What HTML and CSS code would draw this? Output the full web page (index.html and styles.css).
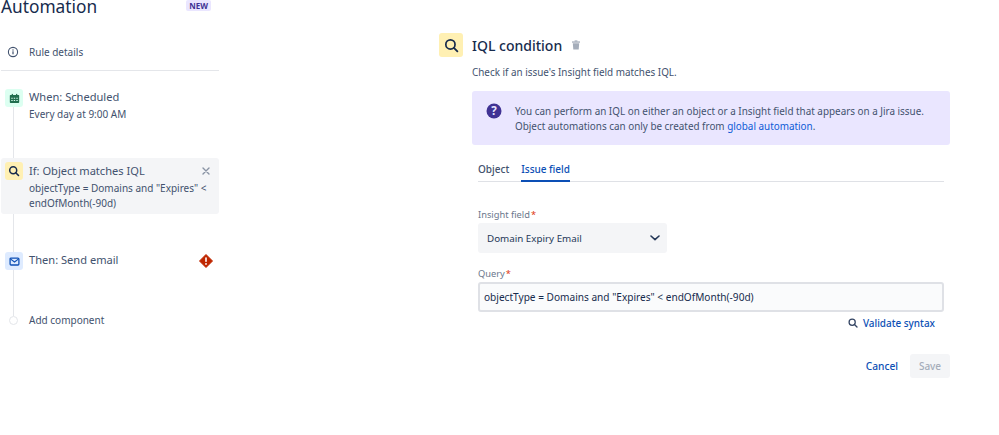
FILE: index.html
```html
<!DOCTYPE html>
<html lang="en">
<head>
<meta charset="utf-8">
<title>Automation</title>
<link rel="stylesheet" href="styles.css">
</head>
<body>
<div class="page">
  <aside class="sidebar">
    <header class="head">
      <h1>Automation</h1>
      <span class="new">NEW</span>
    </header>
    <div class="details">
      <svg class="info" viewBox="0 0 12 12" width="12" height="12"><circle cx="6" cy="6" r="4.6" fill="none" stroke="#42526e" stroke-width="1.1"/><rect x="5.4" y="5.3" width="1.2" height="3" fill="#42526e"/><rect x="5.4" y="3.4" width="1.2" height="1.2" fill="#42526e"/></svg>
      <span>Rule details</span>
    </div>
    <div class="timeline">
      <div class="rail"></div>
      <div class="step step-when">
        <span class="tile tile-green">
          <svg viewBox="0 0 12 12" width="11" height="11"><path d="M1.5 2.2h9a.6.6 0 0 1 .6.6v7.4a.8.8 0 0 1-.8.8H1.700a.8.8 0 0 1-.8-.8V2.800a.6.6 0 0 1 .6-.6z" fill="#216e4e"/><rect x="3" y="1" width="1.300" height="2" fill="#216e4e"/><rect x="7.700" y="1" width="1.300" height="2" fill="#216e4e"/><path d="M2.500 5.200h1.500v1.200H2.500zM5.200 5.200h1.500v1.200H5.200zM8 5.200h1.500v1.200H8zM2.500 7.600h1.500v1.200H2.500zM5.200 7.600h1.500v1.200H5.200zM8 7.600h1.500v1.200H8z" fill="#dcfff1"/></svg>
        </span>
        <div class="step-text step-text-up">
          <div class="step-title">When: Scheduled</div>
          <div class="step-sub">Every day at 9:00 AM</div>
        </div>
      </div>
      <div class="step step-if">
        <span class="tile tile-yellow">
          <svg viewBox="0 0 12 12" width="12" height="12"><circle cx="5.200" cy="5.200" r="3.500" fill="none" stroke="#172b4d" stroke-width="1.500"/><path d="M7.800 7.800l2.700 2.700" stroke="#172b4d" stroke-width="1.600" stroke-linecap="round"/></svg>
        </span>
        <div class="step-text">
          <div class="step-title">If: Object matches IQL</div>
          <div class="step-sub">objectType = Domains and "Expires" &lt; endOfMonth(-90d)</div>
        </div>
        <svg class="close" viewBox="0 0 8 8" width="8" height="8"><path d="M1 1l6 6M7 1L1 7" stroke="#8993a4" stroke-width="1.400" stroke-linecap="round"/></svg>
      </div>
      <div class="step step-then">
        <span class="tile tile-blue">
          <svg viewBox="0 0 12 12" width="11" height="11"><rect x="1.200" y="2.200" width="9.600" height="7.600" rx="1" fill="none" stroke="#0c4fb5" stroke-width="1.400"/><path d="M1.800 3.400L6 6.500l4.200-3.100" fill="none" stroke="#0c4fb5" stroke-width="1.300"/></svg>
        </span>
        <div class="step-title step-title-grow">Then: Send email</div>
        <svg class="error" viewBox="0 0 14 14" width="14" height="14"><path d="M7 .5l6.500 6.500L7 13.500.5 7z" fill="#bf2600" stroke="#bf2600" stroke-linejoin="round"/><rect x="6.200" y="3.300" width="1.600" height="4.700" rx=".7" fill="#fff"/><circle cx="7" cy="9.900" r=".95" fill="#fff"/></svg>
      </div>
      <div class="step step-add">
        <span class="dot"></span>
        <span class="add-label">Add component</span>
      </div>
    </div>
  </aside>

  <main class="panel">
    <div class="panel-head">
      <span class="tile-big">
        <svg viewBox="0 0 14 14" width="15" height="15"><circle cx="6" cy="6" r="4.300" fill="none" stroke="#172b4d" stroke-width="1.600"/><path d="M9.200 9.200l3.300 3.300" stroke="#172b4d" stroke-width="1.700" stroke-linecap="round"/></svg>
      </span>
      <h2>IQL condition</h2>
      <svg class="trash" viewBox="0 0 10 10" width="10" height="10"><rect x="1" y="1.400" width="8" height="1.300" fill="#a5adba"/><rect x="3.600" y=".4" width="2.800" height="1.200" fill="#a5adba"/><path d="M1.800 3.300h6.400l-.5 6.200H2.300z" fill="#a5adba"/></svg>
    </div>
    <div class="panel-body">
      <p class="desc">Check if an issue's Insight field matches IQL.</p>
      <div class="notice">
        <svg class="help" viewBox="0 0 16 16" width="16" height="16"><circle cx="8" cy="8" r="7.500" fill="#403294"/><text x="8" y="12" text-anchor="middle" class="help-mark">?</text></svg>
        <p>You can perform an IQL on either an object or a Insight field that appears on a Jira issue.<br>Object automations can only be created from <a href="#">global automation</a>.</p>
      </div>
      <div class="form">
        <nav class="tabs">
          <span class="tab">Object</span>
          <span class="tab tab-active">Issue field</span>
        </nav>
        <label class="label label-first">Insight field<span class="req">*</span></label>
        <div class="select">
          <span>Domain Expiry Email</span>
          <svg viewBox="0 0 10 6" width="10" height="6"><path d="M1 1l4 3.600L9 1" fill="none" stroke="#253858" stroke-width="1.600" stroke-linecap="round" stroke-linejoin="round"/></svg>
        </div>
        <label class="label label-query">Query<span class="req">*</span></label>
        <div class="input">objectType = Domains and "Expires" &lt; endOfMonth(-90d)</div>
        <div class="validate">
          <svg viewBox="0 0 12 12" width="10" height="10"><circle cx="5" cy="5" r="3.700" fill="none" stroke="#344563" stroke-width="1.500"/><path d="M7.800 7.800l3 3" stroke="#344563" stroke-width="1.600" stroke-linecap="round"/></svg>
          <a href="#">Validate syntax</a>
        </div>
      </div>
      <div class="actions">
        <a class="cancel" href="#">Cancel</a>
        <span class="save">Save</span>
      </div>
    </div>
  </main>
</div>
</body>
</html>
```

FILE: styles.css
```css
* { box-sizing: border-box; }
html, body { margin: 0; padding: 0; background: #fff; }
body {
  width: 999px;
  height: 435px;
  overflow: hidden;
  font-family: "Noto Sans", "Open Sans", sans-serif;
  font-size: 10px;
  color: #42526e;
}
.page { display: flex; align-items: flex-start; }

.sidebar { width: 218px; flex: none; margin-left: 1px; }
.head { display: flex; justify-content: space-between; height: 68px; margin-top: -6px; padding-right: 8px; }
.head h1 { margin: 1px 0 0; font-size: 17.300px; line-height: 24px; font-weight: 400; color: #172b4d; }
.new { align-self: flex-start; margin-top: 6px; padding: 0 3px; height: 11px; line-height: 11px; font-size: 8px; font-weight: 700; color: #403294; background: #eae6ff; border-radius: 2px; }
.details { display: flex; align-items: center; height: 35px; padding: 0 0 2px 6px; gap: 10px; margin-top: -26px; border-bottom: 1px solid #e4e6ea; }
.details span { font-size: 10px; }

.timeline { position: relative; padding-top: 18px; }
.rail { position: absolute; left: 12px; top: 30px; width: 1px; height: 215px; background: #e4e6ea; }
.step { position: relative; display: flex; }
.tile { flex: none; display: flex; align-items: center; justify-content: center; width: 18px; height: 18px; border-radius: 3px; margin-left: 4px; margin-right: 6px; }
.tile-green { background: #dcfff1; }
.tile-yellow { background: #fff0b3; }
.tile-blue { background: #deebff; }
.step-title { font-size: 11.100px; line-height: 18px; color: #42526e; }
.step-sub { font-size: 10px; line-height: 14.500px; color: #42526e; margin-top: 1px; }
.step-text-up { margin-top: -1px; }
.step-when { height: 69px; }
.step-if { background: #f4f5f7; border-radius: 3px; height: 56px; padding-top: 4px; width: 218px; }
.step-if .step-text { width: 180px; }
.close { position: absolute; right: 9px; top: 9px; }
.step-then { margin-top: 38px; align-items: flex-start; height: 58px; }
.step-title-grow { flex: 1; margin-top: -1px; }
.error { margin: 2px 6px 0 0; }
.step-add { align-items: center; height: 18px; margin-top: 1px; }
.dot { width: 9px; height: 9px; margin: 0 11px 0 8px; border: 1.500px solid #e4e6ea; border-radius: 50%; background: #fff; }
.add-label { font-size: 10px; }

.panel { width: 511px; margin-left: 220px; margin-top: 32px; flex: none; }
.panel-head { display: flex; align-items: center; height: 26px; }
.tile-big { display: flex; align-items: center; justify-content: center; width: 24px; height: 24px; border-radius: 3px; background: #fff0b3; margin-right: 9px; }
.panel-head h2 { margin: 0; padding-top: 2px; font-size: 14px; font-weight: 500; color: #172b4d; line-height: 26px; }
.trash { margin-left: 9px; }
.panel-body { padding-left: 33px; }
.desc { margin: 7px 0 0; font-size: 9.900px; line-height: 14px; }
.notice { display: flex; margin-top: 12px; height: 54px; padding: 13px 14px; background: #eae6ff; border-radius: 3px; }
.help { flex: none; margin: -1px 13px 0 0; }
.help-mark { font-size: 11.500px; font-weight: 700; fill: #eae6ff; font-family: "Noto Sans", sans-serif; }
.notice p { margin: 0; font-size: 9.900px; line-height: 15px; white-space: nowrap; }
a { color: #0c5ad6; text-decoration: none; }

.form { width: 466px; margin-left: 6px; }
.tabs { display: flex; gap: 12px; height: 24px; margin-top: 13px; border-bottom: 1px solid #dfe1e6; padding-top: 3px; }
.tab { display: block; height: 20px; line-height: 17px; font-size: 10px; font-weight: 500; color: #42526e; }
.tab-active { color: #0c4fb5; border-bottom: 2px solid #0c4fb5; height: 21px; }
.label { display: block; font-size: 9.300px; line-height: 13px; color: #6b778c; }
.label-first { margin-top: 26px; }
.req { color: #de350b; margin-left: 1px; }
.select { display: flex; align-items: center; justify-content: space-between; width: 189px; height: 30px; margin-top: 2px; padding: 0 7px 0 9px; background: #f4f5f7; border-radius: 3px; color: #253858; font-size: 9.800px; }
.label-query { margin-top: 14px; }
.input { width: 466px; height: 30px; margin-top: 2px; line-height: 26px; padding-left: 4px; background: #fafbfc; border: 2px solid #dfe1e6; border-radius: 3px; color: #172b4d; font-size: 10.100px; }
.validate { display: flex; align-items: center; justify-content: flex-end; gap: 5px; width: 457px; margin-top: 3px; height: 16px; }
.validate a { font-size: 9.950px; font-weight: 500; color: #0c4fb5; }
.actions { display: flex; justify-content: flex-end; align-items: center; gap: 12px; margin-top: 23px; }
.cancel { font-size: 10.200px; font-weight: 500; color: #0c4fb5; }
.save { display: block; width: 40px; height: 24px; line-height: 24px; text-align: center; font-size: 10px; font-weight: 500; color: #a5adba; background: #f4f5f7; border-radius: 3px; }
```
